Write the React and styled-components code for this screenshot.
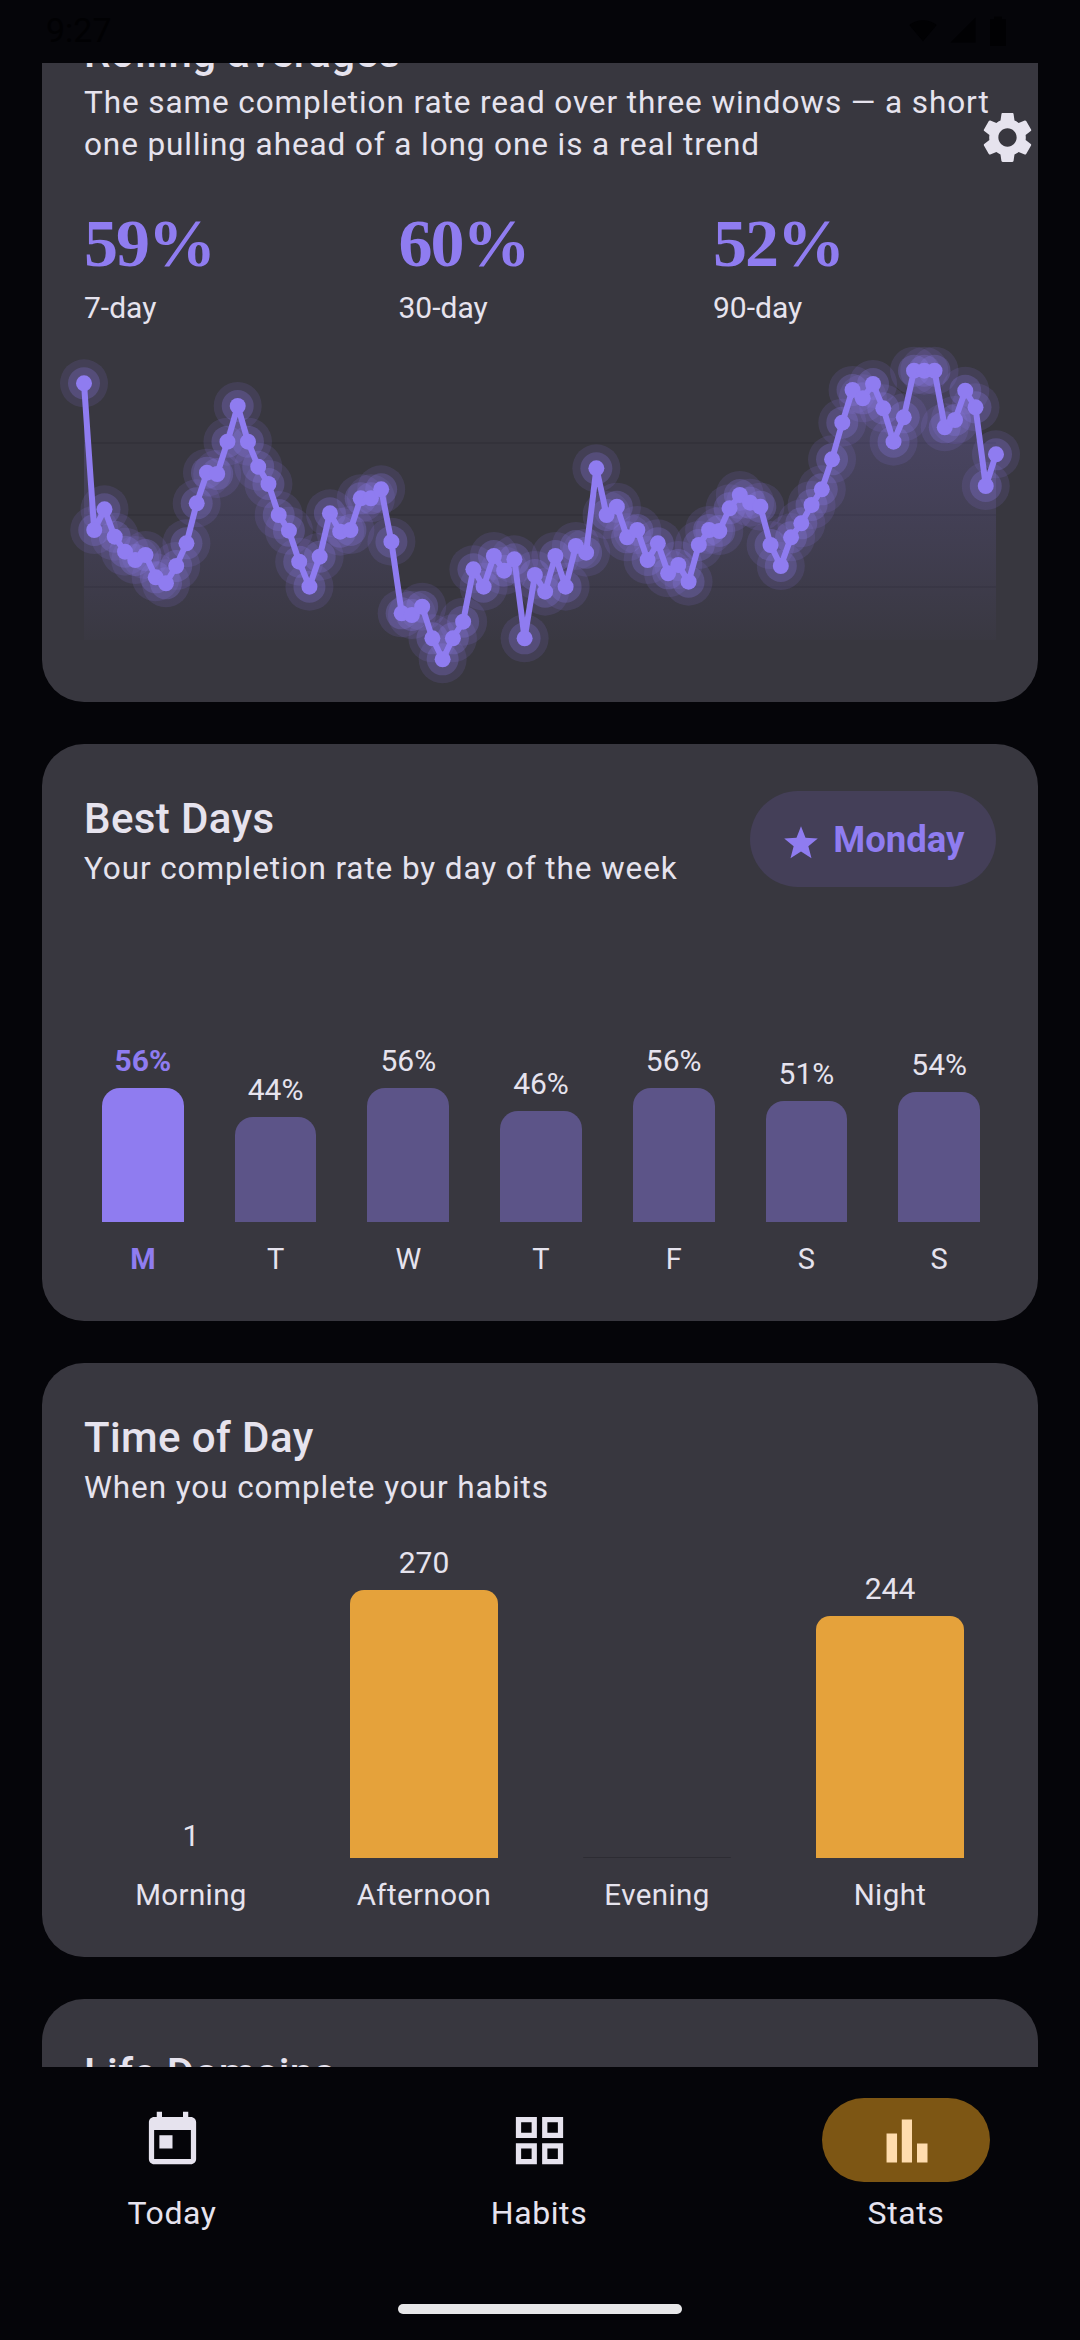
import React from "react";
import styled, { createGlobalStyle } from "styled-components";

const Global = createGlobalStyle`
  html, body { margin: 0; padding: 0; background: #050509; }
  body { font-family: Roboto, "Noto Sans", sans-serif; }
`;

const Phone = styled.div`
  width: 1080px;
  height: 2340px;
  display: flex;
  flex-direction: column;
  overflow: hidden;
  position: relative;
  background: #050509;
`;

const StatusBar = styled.div`
  height: 63px;
  flex: none;
  display: flex;
  align-items: center;
  justify-content: space-between;
  padding: 0 72px 4px 46px;
  box-sizing: border-box;
  color: #010103;
  font-size: 34px;
`;

const StatusIcons = styled.div`
  display: flex;
  gap: 10px;
  align-items: center;
  fill: #010103;
`;

const Scroller = styled.div`
  flex: 1;
  overflow: hidden;
  min-height: 0;
`;

const Column = styled.div`
  display: flex;
  flex-direction: column;
  gap: 42px;
  padding: 0 42px;
  margin-top: -85px;
`;

const Card = styled.section`
  background: #38373f;
  border-radius: 42px;
  padding: 45px 42px 42px;
  box-sizing: border-box;
  position: relative;
  color: #e6e3ee;
  height: ${(p) => p.$h}px;
  flex: none;
`;

const HeaderRow = styled.div`
  display: flex;
  justify-content: space-between;
  align-items: flex-start;
`;

const Title = styled.h2`
  margin: 0;
  font-size: 42px;
  line-height: 59px;
  font-weight: 500;
  letter-spacing: 0.4px;
`;

const Subtitle = styled.p`
  margin: 0;
  font-size: 31.5px;
  line-height: 42px;
  letter-spacing: 0.9px;
  color: #e6e3ee;
`;

const Windows = styled.div`
  display: flex;
  margin-top: 35px;
`;

const WindowStat = styled.div`
  flex: 0 0 314.5px;
`;

const WindowValue = styled.div`
  font-family: "Liberation Serif", serif;
  font-size: 68px;
  line-height: 84px;
  font-weight: 700;
  letter-spacing: -2px;
  color: #8f7cf0;
`;

const WindowLabel = styled.div`
  font-size: 30px;
  line-height: 42px;
  margin-top: 2px;
`;

const Gear = styled.svg`
  position: absolute;
  right: 0;
  top: 129px;
  width: 61px;
  height: 61px;
  fill: #e6e3ee;
`;

const Chart = styled.svg`
  display: block;
  position: absolute;
  left: 0;
  bottom: 0;
  width: 996px;
  height: 360px;
  overflow: visible;
`;

const Pill = styled.div`
  display: flex;
  align-items: center;
  gap: 14px;
  height: 96px;
  padding: 0 31.5px 0 33px;
  margin-top: 2px;
  border-radius: 48px;
  background: #443f58;
  color: #8f7cf0;
  font-size: 36.5px;
  font-weight: 700;
`;

const StarIcon = styled.svg`
  width: 36px;
  height: 36px;
  fill: #8f7cf0;
  margin-top: 6px;
`;

const DayBars = styled.div`
  display: grid;
  grid-template-columns: repeat(7, 1fr);
  column-gap: 51px;
  margin: 100px 16px 0 18px;
  height: 232px;
  align-items: end;
`;

const BarCol = styled.div`
  display: flex;
  flex-direction: column;
  align-items: center;
`;

const BarValue = styled.div`
  font-size: 30px;
  line-height: 36px;
  margin-bottom: ${(p) => p.$gap ?? 9}px;
  white-space: nowrap;
  font-weight: ${(p) => (p.$active ? 700 : 400)};
  color: ${(p) => (p.$active ? "#8f7cf0" : "#e6e3ee")};
`;

const DayBar = styled.div`
  width: 100%;
  border-radius: 18px 18px 0 0;
  background: ${(p) => (p.$active ? "#8f7cf0" : "#5c5488")};
`;

const DayLabels = styled.div`
  display: grid;
  grid-template-columns: repeat(7, 1fr);
  column-gap: 51px;
  margin: 19px 16px 0 18px;
`;

const AxisLabel = styled.div`
  font-size: 29px;
  line-height: 36px;
  text-align: center;
  font-weight: ${(p) => (p.$active ? 700 : 400)};
  color: ${(p) => (p.$active ? "#8f7cf0" : "#e6e3ee")};
`;

const TimeBars = styled.div`
  display: grid;
  grid-template-columns: repeat(4, 1fr);
  column-gap: 85px;
  margin: 23px 32px 0 33px;
  height: 326px;
  align-items: end;
`;

const TimeBar = styled.div`
  width: 100%;
  border-radius: 14px 14px 0 0;
  background: ${(p) => p.$color};
`;

const TimeLabels = styled.div`
  display: grid;
  grid-template-columns: repeat(4, 1fr);
  column-gap: 85px;
  margin: 18px 32px 0 33px;
`;

const TimeLabel = styled.div`
  font-size: 29.5px;
  line-height: 38px;
  letter-spacing: 0.4px;
  text-align: center;
  white-space: nowrap;
`;

const BottomArea = styled.div`
  flex: none;
  height: 273px;
  background: #050509;
  position: relative;
`;

const Nav = styled.nav`
  display: flex;
  justify-content: center;
  gap: 199px;
  padding: 31px 2px 0 0;
`;

const NavItem = styled.div`
  width: 168px;
  display: flex;
  flex-direction: column;
  align-items: center;
  color: #e6e3ee;
  font-size: 32px;
  letter-spacing: 0.6px;
  line-height: 40px;
  gap: 11px;
`;

const IconPill = styled.div`
  width: 168px;
  height: 84px;
  border-radius: 42px;
  display: flex;
  align-items: center;
  justify-content: center;
  background: ${(p) => (p.$active ? "#7d5614" : "transparent")};
`;

const NavIcon = styled.svg`
  width: 63px;
  height: 63px;
  fill: ${(p) => (p.$active ? "#ffdcae" : "#e6e3ee")};
`;

const HomeBar = styled.div`
  position: absolute;
  left: 398px;
  bottom: 26px;
  width: 284px;
  height: 10px;
  border-radius: 5px;
  background: #e8e8ea;
`;

// y of each point on the 90-day curve, read off at 3x from y=330
const rawY = [
  160, 600, 538, 620, 665, 690, 675, 742, 760, 708, 640, 520, 428, 432, 335, 228, 335, 410, 462, 555, 602, 695, 770, 680,
  550, 605, 600, 505, 505, 478, 635, 850, 855, 830, 925, 988, 925, 875, 718, 770, 678, 722, 688, 925, 735, 785, 678, 770,
  648, 668, 415, 555, 530, 622, 600, 690, 640, 730, 705, 755, 645, 600, 603, 535, 495, 518, 530, 645, 708, 622, 580, 525,
  478, 388, 278, 180, 205, 162, 235, 335, 262, 122, 122, 122, 292, 270, 182, 232, 468, 373,
];

const chartTop = 342;
const points = rawY.map((y, i) => ({ x: 42 + (i * 912) / 89, y: 330 + y / 3 - chartTop }));
const linePath = points.map((p, i) => `${i ? "L" : "M"}${p.x.toFixed(1)} ${p.y.toFixed(1)}`).join(" ");
const areaPath = `${linePath} L954 298 L42 298 Z`;

const days = [
  { d: "M", v: "56%", h: 134, active: true },
  { d: "T", v: "44%", h: 105 },
  { d: "W", v: "56%", h: 134 },
  { d: "T", v: "46%", h: 111 },
  { d: "F", v: "56%", h: 134 },
  { d: "S", v: "51%", h: 121 },
  { d: "S", v: "54%", h: 130 },
];

const times = [
  { t: "Morning", v: "1", h: 0, color: "transparent", gap: 4 },
  { t: "Afternoon", v: "270", h: 268, color: "#e5a23b" },
  { t: "Evening", v: "", h: 1, color: "#2d2c33" },
  { t: "Night", v: "244", h: 242, color: "#e5a23b" },
];

const windows = [
  { v: "59%", l: "7-day" },
  { v: "60%", l: "30-day" },
  { v: "52%", l: "90-day" },
];

const App = () => (
  <Phone>
    <Global />
    <StatusBar>
      <span>9:27</span>
      <StatusIcons>
        <svg width="30" height="30" viewBox="0 0 24 24"><path d="M12 21 1 8c6-5 16-5 22 0z" /></svg>
        <svg width="30" height="30" viewBox="0 0 24 24"><path d="M22 22H2L22 2z" /></svg>
        <svg width="20" height="32" viewBox="0 0 14 24"><path d="M4 2h6v2h3v20H1V4h3z" /></svg>
      </StatusIcons>
    </StatusBar>
    <Scroller>
      <Column>
        <Card $h={724}>
          <Title>Rolling averages</Title>
          <Subtitle>
            The same completion rate read over three windows — a short one pulling ahead of a long one is a real trend
          </Subtitle>
          <Gear viewBox="0 0 24 24">
            <path d="M19.14 12.94c.04-.3.06-.61.06-.94 0-.32-.02-.64-.07-.94l2.03-1.58c.18-.14.23-.41.12-.61l-1.92-3.32c-.12-.22-.37-.29-.59-.22l-2.39.96c-.5-.38-1.03-.7-1.62-.94l-.36-2.54c-.04-.24-.24-.41-.48-.41h-3.84c-.24 0-.43.17-.47.41l-.36 2.54c-.59.24-1.13.57-1.62.94l-2.39-.96c-.22-.08-.47 0-.59.22L2.74 8.87c-.12.21-.08.47.12.61l2.03 1.58c-.05.3-.09.63-.09.94s.02.64.07.94l-2.03 1.58c-.18.14-.23.41-.12.61l1.92 3.32c.12.22.37.29.59.22l2.39-.96c.5.38 1.03.7 1.62.94l.36 2.54c.05.24.24.41.48.41h3.84c.24 0 .44-.17.47-.41l.36-2.54c.59-.24 1.13-.56 1.62-.94l2.39.96c.22.08.47 0 .59-.22l1.92-3.32c.12-.22.07-.47-.12-.61l-2.01-1.58zM12 15.6c-1.98 0-3.6-1.62-3.6-3.6s1.62-3.6 3.6-3.6 3.6 1.62 3.6 3.6-1.62 3.6-3.6 3.6z" />
          </Gear>
          <Windows>
            {windows.map((w) => (
              <WindowStat key={w.l}>
                <WindowValue>{w.v}</WindowValue>
                <WindowLabel>{w.l}</WindowLabel>
              </WindowStat>
            ))}
          </Windows>
          <Chart viewBox="0 0 996 360">
            <defs>
              <linearGradient id="area" x1="0" y1="0" x2="0" y2="1">
                <stop offset="0" stopColor="#8f7cf0" stopOpacity="0.25" />
                <stop offset="1" stopColor="#8f7cf0" stopOpacity="0" />
              </linearGradient>
            </defs>
            {[101, 173, 245].map((y) => (
              <line key={y} x1="42" x2="954" y1={y} y2={y} stroke="#33323a" strokeWidth="2" />
            ))}
            <path d={areaPath} fill="url(#area)" />
            {points.map((p, i) => (
              <circle key={`o${i}`} cx={p.x} cy={p.y} r="24" fill="#8f7cf0" fillOpacity="0.13" />
            ))}
            {points.map((p, i) => (
              <circle key={`m${i}`} cx={p.x} cy={p.y} r="16" fill="#8f7cf0" fillOpacity="0.24" />
            ))}
            <path d={linePath} fill="none" stroke="#8f7cf0" strokeWidth="6" strokeLinejoin="round" />
            {points.map((p, i) => (
              <circle key={`d${i}`} cx={p.x} cy={p.y} r="8" fill="#8f7cf0" />
            ))}
          </Chart>
        </Card>

        <Card $h={577}>
          <HeaderRow>
            <div>
              <Title>Best Days</Title>
              <Subtitle>Your completion rate by day of the week</Subtitle>
            </div>
            <Pill>
              <StarIcon viewBox="0 0 24 24">
                <path d="M12 1.5l3 7.6 8.2.5-6.3 5.2 2.1 8-7-4.4-7 4.4 2.1-8L.8 9.6 9 9.1z" />
              </StarIcon>
              Monday
            </Pill>
          </HeaderRow>
          <DayBars>
            {days.map((x, i) => (
              <BarCol key={i}>
                <BarValue $active={x.active}>{x.v}</BarValue>
                <DayBar $active={x.active} style={{ height: x.h }} />
              </BarCol>
            ))}
          </DayBars>
          <DayLabels>
            {days.map((x, i) => (
              <AxisLabel key={i} $active={x.active}>{x.d}</AxisLabel>
            ))}
          </DayLabels>
        </Card>

        <Card $h={594}>
          <Title>Time of Day</Title>
          <Subtitle>When you complete your habits</Subtitle>
          <TimeBars>
            {times.map((x) => (
              <BarCol key={x.t}>
                <BarValue $gap={x.gap}>{x.v}</BarValue>
                <TimeBar $color={x.color} style={{ height: x.h }} />
              </BarCol>
            ))}
          </TimeBars>
          <TimeLabels>
            {times.map((x) => (
              <TimeLabel key={x.t}>{x.t}</TimeLabel>
            ))}
          </TimeLabels>
        </Card>

        <Card $h={400}>
          <Title>Life Domains</Title>
        </Card>
      </Column>
    </Scroller>
    <BottomArea>
      <Nav>
        <NavItem>
          <IconPill>
            <NavIcon viewBox="0 0 24 24">
              <path d="M19 3h-1V1h-2v2H8V1H6v2H5c-1.11 0-1.99.9-1.99 2L3 19c0 1.1.89 2 2 2h14c1.1 0 2-.9 2-2V5c0-1.1-.9-2-2-2zm0 16H5V8h14v11zM7 10h5v5H7z" />
            </NavIcon>
          </IconPill>
          Today
        </NavItem>
        <NavItem>
          <IconPill>
            <NavIcon viewBox="0 0 24 24">
              <path d="M3 3v8h8V3H3zm6 6H5V5h4v4zm-6 4v8h8v-8H3zm6 6H5v-4h4v4zm4-16v8h8V3h-8zm6 6h-4V5h4v4zm-6 4v8h8v-8h-8zm6 6h-4v-4h4v4z" />
            </NavIcon>
          </IconPill>
          Habits
        </NavItem>
        <NavItem>
          <IconPill $active>
            <NavIcon $active viewBox="0 0 24 24">
              <path d="M4.4 9.3h4v11.1h-4zM10.2 4h3.9v16.4h-3.9zM16 13.1h4v7.3h-4z" />
            </NavIcon>
          </IconPill>
          Stats
        </NavItem>
      </Nav>
      <HomeBar />
    </BottomArea>
  </Phone>
);

export default App;
